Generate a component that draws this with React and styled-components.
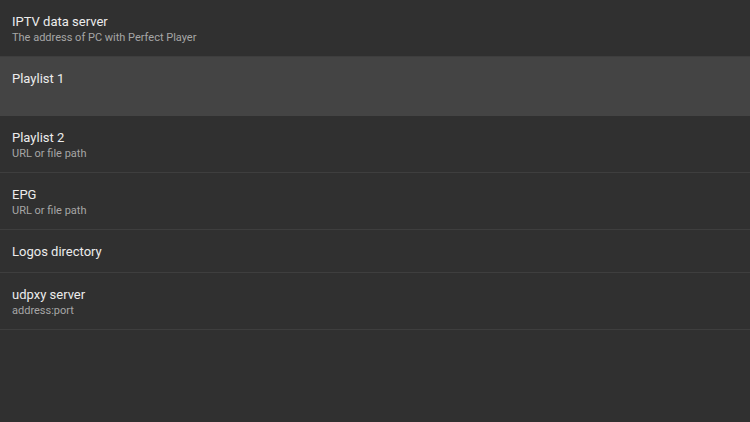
import styled, { createGlobalStyle } from "styled-components"

const GlobalStyle = createGlobalStyle`
  html, body {
    margin: 0;
    padding: 0;
    background-color: #303030;
  }
  body {
    font-family: Roboto, "Liberation Sans", sans-serif;
  }
`

const Screen = styled.div`
  width: 750px;
  height: 422px;
  background-color: #303030;
  display: flex;
  flex-direction: column;
  overflow: hidden;
`

const Row = styled.div`
  display: flex;
  flex-direction: column;
  padding: 14px 12px 11px;
  padding-bottom: ${(p) => (p.$selected ? "13px" : p.$single ? "12px" : "11px")};
  background-color: ${(p) => (p.$selected ? "#444444" : "transparent")};
  border-bottom: 1px solid ${(p) => (p.$selected ? "#444444" : "#3e3e3e")};
`

const Title = styled.div`
  font-size: 13px;
  line-height: 16px;
  color: #ececec;
`

const Subtitle = styled.div`
  margin-top: 1px;
  font-size: 11px;
  line-height: 14px;
  min-height: 14px;
  color: #a6a6a6;
`

const items = [
  { title: "IPTV data server", sub: "The address of PC with Perfect Player" },
  { title: "Playlist 1", sub: "", selected: true },
  { title: "Playlist 2", sub: "URL or file path" },
  { title: "EPG", sub: "URL or file path" },
  { title: "Logos directory", sub: null },
  { title: "udpxy server", sub: "address:port" },
]

function App() {
  return (
    <>
      <GlobalStyle />
      <Screen>
        {items.map((item, index) => (
          <Row key={index} $selected={item.selected} $single={item.sub === null}>
            <Title>{item.title}</Title>
            {item.sub !== null && <Subtitle>{item.sub}</Subtitle>}
          </Row>
        ))}
      </Screen>
    </>
  )
}

export default App
